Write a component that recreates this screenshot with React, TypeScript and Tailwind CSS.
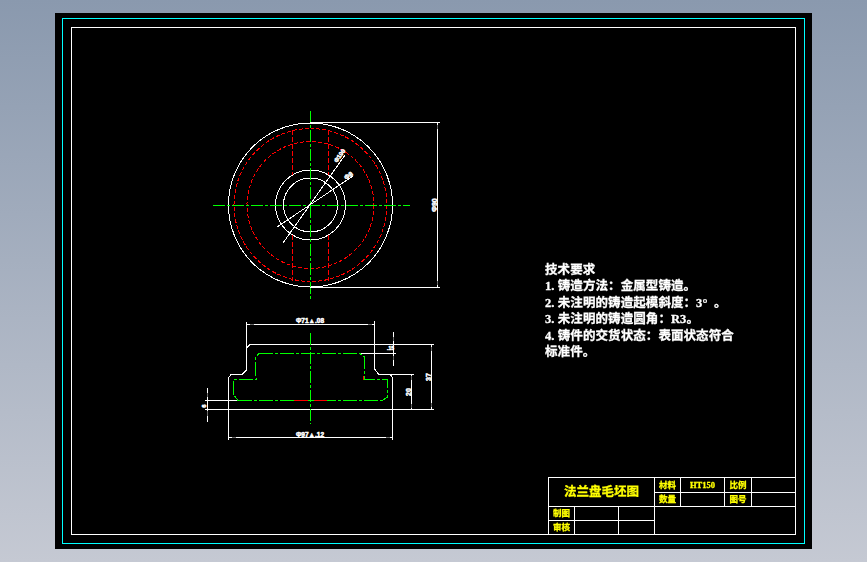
const CJK = "font-['Liberation_Serif','Noto_Sans_CJK_SC',serif]";

const Cell = ({ w, children }: { w: string; children?: React.ReactNode }) => (
  <div className={`${w} h-full shrink-0 flex items-center justify-center border-r border-white text-[8.5px] font-bold text-[#ffff00] leading-none [-webkit-text-stroke:0.3px_#ffff00]`}>
    {children}
  </div>
);

function Drawing() {
  const line = { stroke: '#fff', strokeWidth: 1, fill: 'none' };
  const red = { stroke: '#ff0000', strokeWidth: 1, fill: 'none' };
  const green = { stroke: '#00ff00', strokeWidth: 1, fill: 'none' };
  const cd = '12 2 3 2';
  const ticks: [number, number, number, number][] = [
    [437.5, 125, 437.5, 129], [437.5, 281, 437.5, 285], [250, 324.5, 254, 324.5], [368, 324.5, 372, 324.5],
    [232, 437.5, 236, 437.5], [386, 437.5, 390, 437.5], [431.5, 347, 431.5, 351], [431.5, 403, 431.5, 407],
    [411.5, 376, 411.5, 380], [411.5, 404, 411.5, 408], [393.5, 337, 393.5, 341], [393.5, 356, 393.5, 360],
    [207.5, 393, 207.5, 397], [207.5, 411, 207.5, 416],
  ];
  return (
    <svg viewBox="72 28 723 506" className="absolute inset-0 w-full h-full" shapeRendering="crispEdges">
      {/* plan view */}
      <circle cx={310.5} cy={205} r={82} {...line} />
      <circle cx={310.5} cy={205} r={35} {...line} />
      <circle cx={310.5} cy={205} r={27} {...line} />
      <circle cx={310.5} cy={205} r={76.5} {...red} strokeDasharray="4 2" />
      <circle cx={310.5} cy={205} r={63.5} {...red} strokeDasharray="4 2" />
      <path d="M292.5 130V175M328.5 130V175M292.5 235V281M328.5 235V281" {...red} strokeDasharray="5 2" />
      <path d="M213 205H410" {...green} strokeDasharray={cd} />
      <path d="M310.5 111V300" {...green} strokeDasharray={cd} />
      <path d="M310 122.5H440M310 287.5H440M437.5 122V288M283 243L345 155M277 227L353 176" {...line} />
      {/* section view */}
      <path d="M250 344.5H372M250 344.5L246.5 348V370L242.5 374H231.5L228.5 377.5V409.5H392.5V377.5L390 374H378.5L374.5 369V321M246.5 322V348" {...line} />
      <path d="M246 324.5H375M228.5 409.5V440M392.5 409.5V440M228 437.5H393M372 344.5H434M392 409.5H434M431.5 344V410M390 374.5H414M411.5 374V410M393.5 332V366M359 353.5H396M207.5 388V422M205 400.5H238M205 409.5H228" {...line} />
      <path d="M259 353.5H360L364.5 357V379.5H387.5V397L382.5 400.5M238 400.5H382M234.5 396L238 400.5M233.5 395V379.5H256.5L255.5 376V357L259 353.5" {...green} strokeDasharray="14 2 3 2" />
      <path d="M294 400.5H308M314 400.5H327M363.5 376V379.5" {...red} />
      <path d="M310.5 333V424" {...green} strokeDasharray={cd} />
      {ticks.map(([a, b, c, d], i) => (
        <line key={i} x1={a} y1={b} x2={c} y2={d} stroke="#666" strokeWidth={1.5} />
      ))}
      {/* dimension labels */}
      <g fill="#fff" stroke="#fff" strokeWidth={0.5} fontFamily="'Liberation Sans',sans-serif" fontWeight={700} fontSize={6.5}>
        <text x={310} y={322.5} textAnchor="middle">Φ71▲.08</text>
        <text x={310} y={436.5} textAnchor="middle">Φ97▲.12</text>
        <text transform="translate(436.5 205) rotate(-90)" fontSize={7} textAnchor="middle">Φ90</text>
        <text transform="translate(337 163) rotate(-55)" fontSize={6}>Φ100</text>
        <text transform="translate(346 180) rotate(-34)" fontSize={6.5}>Φ8</text>
        <text x={387} y={350} fontSize={5}>.15</text>
        <text transform="translate(431 377) rotate(-90)" fontSize={7} textAnchor="middle">37</text>
        <text transform="translate(411 392) rotate(-90)" fontSize={7} textAnchor="middle">20</text>
        <text transform="translate(206 406) rotate(-90)" fontSize={6} textAnchor="middle">6</text>
      </g>
    </svg>
  );
}

export default function App() {
  return (
    <div className="h-screen w-full flex items-center justify-center bg-gradient-to-b from-[#8a99ae] to-[#c5c9d3]">
      <div className="w-[757px] h-[536px] bg-black px-[7px] pt-[5px] pb-[5px]">
        <div className="w-full h-full border border-[#00ffff] px-[8px] pt-[8px] pb-[8px]">
          <div className={`relative w-full h-full border border-white flex justify-end items-end ${CJK}`}>
            <Drawing />
            <div className="absolute left-[473px] top-[234px] text-white font-bold text-[12.5px] tracking-[0.08px] leading-[16.4px] whitespace-nowrap contrast-200 [-webkit-text-stroke:0.3px_#ffffff]">
              <div>技术要求</div>
              <div>1. 铸造方法：金属型铸造。</div>
              <div>2. 未注明的铸造起模斜度：3°&nbsp;&nbsp;。</div>
              <div>3. 未注明的铸造圆角：R3。</div>
              <div>4. 铸件的交货状态：表面状态符合</div>
              <div>标准件。</div>
            </div>
            <div className="relative w-[247px] h-[57px] flex border-l border-t border-white contrast-200">
              <div className="w-[106px] flex flex-col shrink-0 border-r border-white">
                <div className="h-[29px] flex items-center justify-center border-b border-white text-[12.5px] font-bold text-[#ffff00] leading-none [-webkit-text-stroke:0.3px_#ffff00]">
                  法兰盘毛坯图
                </div>
                <div className="flex-1 flex border-b border-white">
                  <div className="w-[26px] flex items-center justify-center border-r border-white text-[8.5px] font-bold text-[#ffff00] leading-none [-webkit-text-stroke:0.3px_#ffff00]">制图</div>
                  <div className="w-[44px] border-r border-white" />
                </div>
                <div className="flex-1 flex">
                  <div className="w-[26px] flex items-center justify-center border-r border-white text-[8.5px] font-bold text-[#ffff00] leading-none [-webkit-text-stroke:0.3px_#ffff00]">审核</div>
                  <div className="w-[44px] border-r border-white" />
                </div>
              </div>
              <div className="flex-1 flex flex-col">
                <div className="h-[15px] flex border-b border-white">
                  <Cell w="w-[26px]">材料</Cell>
                  <Cell w="w-[44px]">HT150</Cell>
                  <Cell w="w-[27px]">比例</Cell>
                </div>
                <div className="h-[14px] flex border-b border-white">
                  <Cell w="w-[26px]">数量</Cell>
                  <Cell w="w-[44px]" />
                  <Cell w="w-[27px]">图号</Cell>
                </div>
              </div>
            </div>
          </div>
        </div>
      </div>
    </div>
  );
}
